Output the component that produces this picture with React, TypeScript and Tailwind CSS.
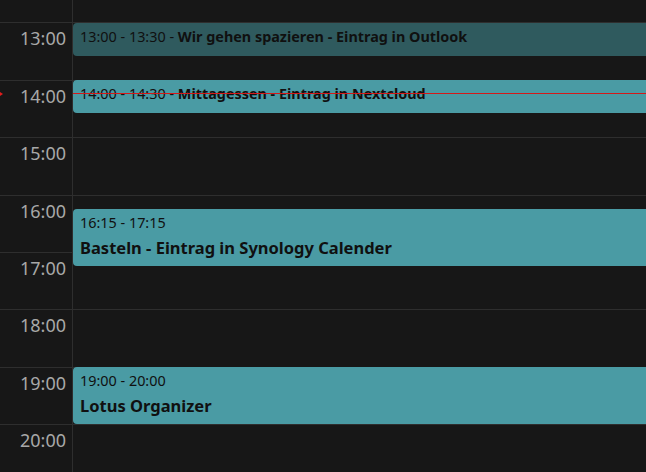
import React from "react";

const HOUR = 57.4;
const TOP = 22.4;
const hours = [13, 14, 15, 16, 17, 18, 19, 20];

type Ev = {
  start: number;
  end: number;
  time: string;
  title: string;
  past?: boolean;
  inline?: boolean;
};

const events: Ev[] = [
  { start: 13, end: 13.5, time: "13:00 - 13:30", title: "Wir gehen spazieren - Eintrag in Outlook", past: true, inline: true },
  { start: 14, end: 14.5, time: "14:00 - 14:30", title: "Mittagessen - Eintrag in Nextcloud", inline: true },
  { start: 16.25, end: 17.25, time: "16:15 - 17:15", title: "Basteln - Eintrag in Synology Calender" },
  { start: 19, end: 20, time: "19:00 - 20:00", title: "Lotus Organizer" },
];

const y = (h: number) => TOP + (h - 13) * HOUR;

export default function App() {
  const nowY = 93;
  return (
    <div
      className="relative w-[646px] h-[472px] overflow-hidden bg-[#171717]"
      style={{ fontFamily: "'Noto Sans', 'Open Sans', sans-serif" }}
    >
      <div className="flex flex-col">
        <div className="flex h-[22.4px]">
          <div className="w-[73px] shrink-0 border-r border-[#2e2e2e]" />
          <div className="flex-1" />
        </div>
        {hours.map((h) => (
          <div key={h} className="flex h-[57.4px] shrink-0 border-t border-[#2e2e2e] box-border">
            <div className="w-[73px] shrink-0 border-r border-[#2e2e2e] pr-[6px] pt-[3px] text-right text-[18px] leading-6 text-[#a8a8a8]">
              {h}:00
            </div>
            <div className="flex-1" />
          </div>
        ))}
      </div>

      <div className="absolute left-[73px] right-0 top-0 bottom-0">
        {events.map((e) => {
          const top = y(e.start) + 0.5;
          const height = Math.max(33, (e.end - e.start) * HOUR - 0.8);
          return (
            <div
              key={e.time}
              className={`absolute left-0 -right-2 rounded-[4px] px-[7px] text-[#101010] ${
                e.past ? "bg-[#2f5a5e]" : "bg-[#4a9ba4]"
              }`}
              style={{ top, height }}
            >
              {e.inline ? (
                <div className="pt-[4px] text-[14.4px] leading-5 whitespace-nowrap">
                  {e.time} - <span className="font-bold">{e.title}</span>
                </div>
              ) : (
                <div className="pt-[4px] whitespace-nowrap">
                  <div className="text-[14.4px] leading-5">{e.time}</div>
                  <div className="mt-[4px] text-[16.5px] leading-[22px] font-bold">{e.title}</div>
                </div>
              )}
            </div>
          );
        })}
        <div className="absolute left-0 right-0 h-px bg-[#d41919]" style={{ top: nowY }} />
      </div>

      <div
        className="absolute left-[-3px] w-0 h-0 border-y-[4px] border-y-transparent border-l-[6px] border-l-[#e11d1d]"
        style={{ top: nowY - 3.5 }}
      />
    </div>
  );
}
